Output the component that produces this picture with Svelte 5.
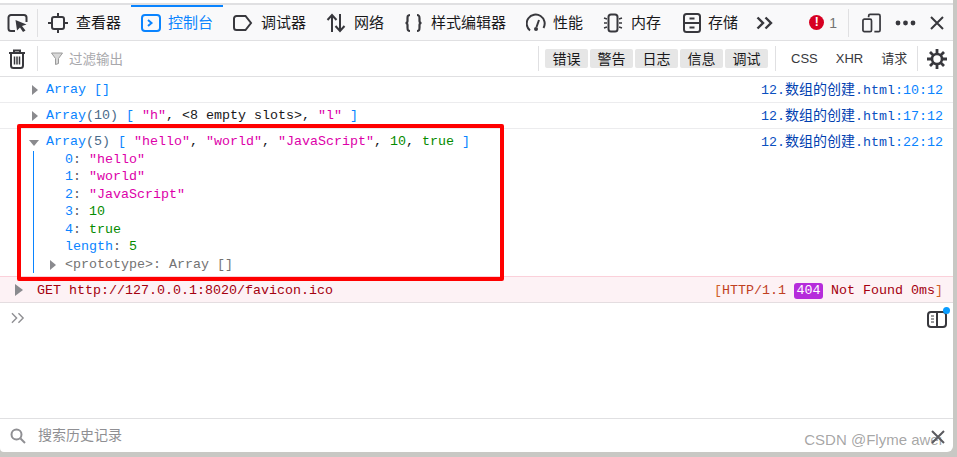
<script>
	const tabs = [
		{ id: 'inspector', label: '查看器' },
		{ id: 'console', label: '控制台', active: true },
		{ id: 'debugger', label: '调试器' },
		{ id: 'network', label: '网络' },
		{ id: 'style', label: '样式编辑器' },
		{ id: 'perf', label: '性能' },
		{ id: 'memory', label: '内存' },
		{ id: 'storage', label: '存储' }
	];
	const levels = ['错误', '警告', '日志', '信息', '调试'];
	const kinds = ['CSS', 'XHR', '请求'];
</script>

<div class="window">
	<nav class="tabs">
		<button class="pick" aria-label="pick">
			<svg width="21" height="20" viewBox="0 0 21 20" fill="none" stroke="#38383d" stroke-width="2"><path d="M8 18H4a2.500 2.500 0 0 1-2.500-2.500v-11A2.500 2.500 0 0 1 4 2h13a2.500 2.500 0 0 1 2.500 2.500V9" /><path d="M8.500 7l11 4.500-4.500 1.500 3.500 4.500-2.500 1.500-3-4.500-3 3z" fill="#38383d" stroke="none" /></svg>
		</button>
		{#each tabs as tab}
			<div class="tab {tab.id}" class:active={tab.active}>
				{#if tab.id === 'inspector'}
					<svg width="20" height="20" viewBox="0 0 20 20" fill="none" stroke="#38383d" stroke-width="2"><rect x="4" y="4" width="12" height="12" rx="2" /><path d="M10 0v4M10 16v4M0 10h4M16 10h4" /></svg>
				{:else if tab.id === 'console'}
					<svg width="20" height="20" viewBox="0 0 20 20" fill="none" stroke="#0a84ff" stroke-width="2"><rect x="1" y="2" width="18" height="16" rx="3" /><path d="M7 7l3.500 3L7 13" /></svg>
				{:else if tab.id === 'debugger'}
					<svg width="20" height="20" viewBox="0 0 20 20" fill="none" stroke="#38383d" stroke-width="2"><path d="M3.500 3h9l5.500 7-5.500 7h-9A2.500 2.500 0 0 1 1 14.500v-9A2.500 2.500 0 0 1 3.500 3z" /></svg>
				{:else if tab.id === 'network'}
					<svg width="20" height="20" viewBox="0 0 20 20" fill="none" stroke="#38383d" stroke-width="2"><path d="M6 19V2M1.500 7L6 2l4.500 5M14 1v17M9.500 13l4.500 5 4.500-5" /></svg>
				{:else if tab.id === 'style'}
					<svg width="20" height="20" viewBox="0 0 20 20" fill="none" stroke="#38383d" stroke-width="2.200"><path d="M6 2C3.500 2 3.500 3.500 3.500 5.500V8c0 1.500-1 2-2 2 1 0 2 .5 2 2v2.500c0 2 0 3.500 2.500 3.500" /><path d="M13 2c2.500 0 2.500 1.500 2.500 3.500V8c0 1.500 1 2 2 2-1 0-2 .5-2 2v2.500c0 2 0 3.500-2.500 3.500" /></svg>
				{:else if tab.id === 'perf'}
					<svg width="20" height="20" viewBox="0 0 20 20" fill="none" stroke="#38383d" stroke-width="2"><path d="M4 17.500A9 9 0 1 1 17.500 15" /><path d="M13 7l-2.500 7" /><circle cx="10" cy="16" r="2" fill="#38383d" stroke="none" /></svg>
				{:else if tab.id === 'memory'}
					<svg width="20" height="20" viewBox="0 0 20 20" fill="none" stroke="#38383d" stroke-width="1.500"><rect x="5.500" y="1.500" width="9" height="17" rx="2.500" stroke-width="2" /><path d="M1 5l3 1M1 10h3M1 15l3-1M16 6l3-1M16 10h3M16 14l3 1" /></svg>
				{:else if tab.id === 'storage'}
					<svg width="20" height="20" viewBox="0 0 20 20" fill="none" stroke="#38383d" stroke-width="2"><rect x="2" y="1" width="16" height="18" rx="2.500" /><path d="M2 10h16M7.500 5.500h5M7.500 14.500h5" /></svg>
				{/if}
				<span class="label">{tab.label}</span>
			</div>
		{/each}
		<svg class="more" width="18" height="14" viewBox="0 0 18 14" fill="none" stroke="#38383d" stroke-width="2.400"><path d="M1.500 1.500L7 7l-5.500 5.500M9.500 1.500L15 7l-5.500 5.500" /></svg>
		<div class="right">
			<div class="errors">
				<span class="dot">!</span>
				<span class="count">1</span>
			</div>
			<div class="tools">
				<svg width="19" height="20" viewBox="0 0 20 20" fill="none" stroke="#38383d" stroke-width="1.800"><path d="M7 4V2.500A1.500 1.500 0 0 1 8.500 1h9A1.500 1.500 0 0 1 19 2.500v15a1.500 1.500 0 0 1-1.500 1.500H13" /><rect x="1" y="6" width="9" height="13" rx="1.500" /></svg>
				<svg width="21" height="6" viewBox="0 0 21 6" fill="#38383d"><circle cx="3" cy="3" r="2.400" /><circle cx="10.500" cy="3" r="2.400" /><circle cx="18" cy="3" r="2.400" /></svg>
				<svg width="14" height="14" viewBox="0 0 14 14" fill="none" stroke="#38383d" stroke-width="2"><path d="M1 1l12 12M13 1L1 13" /></svg>
			</div>
		</div>
	</nav>

	<div class="filters">
		<div class="trash">
			<svg width="16" height="20" viewBox="0 0 16 20" fill="none" stroke="#38383d" stroke-width="2"><path d="M0 4h16M5 3V1.500h6V3" /><path d="M2 4.500v12A2.500 2.500 0 0 0 4.500 19h7a2.500 2.500 0 0 0 2.500-2.500v-12" /><path d="M5.500 7.500v8M8 7.500v8M10.500 7.500v8" stroke-width="1.500" /></svg>
		</div>
		<div class="search">
			<svg width="12" height="13" viewBox="0 0 12 13" fill="#d8d8d8" stroke="#9a9a9a" stroke-width="1"><path d="M.500 1h11L7.500 6.500v5l-3 1V6.500z" /></svg>
			<span class="placeholder">过滤输出</span>
		</div>
		<div class="levels">
			{#each levels as level}
				<span class="level">{level}</span>
			{/each}
		</div>
		<div class="kinds">
			{#each kinds as kind}
				<span>{kind}</span>
			{/each}
		</div>
		<div class="gear">
			<svg width="20" height="20" viewBox="0 0 20 20" fill="none" stroke="#38383d"><circle cx="10" cy="10" r="5" stroke-width="2.600" /><path d="M10 0v5M10 15v5M0 10h5M15 10h5M3 3l3.500 3.500M13.500 13.500L17 17M17 3l-3.500 3.500M6.500 13.500L3 17" stroke-width="2.800" /></svg>
		</div>
	</div>

	<main class="log">
		<div class="row">
			<span class="arrow"></span>
			<div class="msg"><span class="obj">Array</span> <span class="br">[]</span></div>
			<span class="src">12.<i>数组的创建</i>.html<em>:10:12</em></span>
		</div>
		<div class="row">
			<span class="arrow"></span>
			<div class="msg"><span class="obj">Array<span class="num-grey">(10)</span></span> <span class="br">[</span> <span class="str">"h"</span>, &lt;8 empty slots&gt;, <span class="str">"l"</span> <span class="br">]</span></div>
			<span class="src">12.<i>数组的创建</i>.html<em>:17:12</em></span>
		</div>
		<div class="row open">
			<span class="arrow down"></span>
			<div class="msg">
				<div><span class="obj">Array<span class="num-grey">(5)</span></span> <span class="br">[</span> <span class="str">"hello"</span>, <span class="str">"world"</span>, <span class="str">"JavaScript"</span>, <span class="nr">10</span>, <span class="nr">true</span> <span class="br">]</span></div>
				<div class="props">
					<div><span class="key">0</span><span class="colon">:</span> <span class="str">"hello"</span></div>
					<div><span class="key">1</span><span class="colon">:</span> <span class="str">"world"</span></div>
					<div><span class="key">2</span><span class="colon">:</span> <span class="str">"JavaScript"</span></div>
					<div><span class="key">3</span><span class="colon">:</span> <span class="nr">10</span></div>
					<div><span class="key">4</span><span class="colon">:</span> <span class="nr">true</span></div>
					<div><span class="key">length</span><span class="colon">:</span> <span class="nr">5</span></div>
					<div class="proto"><span class="arrow small"></span>&lt;prototype&gt;: Array []</div>
				</div>
			</div>
			<span class="src">12.<i>数组的创建</i>.html<em>:22:12</em></span>
		</div>
		<div class="row error">
			<span class="arrow big"></span>
			<div class="msg">GET http://127.0.0.1:8020/favicon.ico</div>
			<span class="status"><span class="bracket">[</span><span class="http">HTTP/1.1</span> <span class="badge">404</span> Not Found 0ms<span class="bracket">]</span></span>
		</div>
		<div class="prompt">
			<svg width="14" height="12" viewBox="0 0 15 12" fill="none" stroke="#8f8f93" stroke-width="1.500"><path d="M1 1l5 5-5 5M8 1l5 5-5 5" /></svg>
			<svg class="side" width="20" height="17" viewBox="0 0 20 17" fill="none" stroke="#38383d" stroke-width="2"><rect x="1" y="1" width="18" height="15" rx="3" /><path d="M10 1v15" /><path d="M4 5h3M4 8h3M4 11h3" stroke-width="1" /></svg>
			<span class="ping"></span>
		</div>
	</main>

	<footer class="history">
		<svg width="16" height="16" viewBox="0 0 16 16" fill="none" stroke="#8f8f93" stroke-width="2"><circle cx="6.500" cy="6.500" r="5" /><path d="M10.500 10.500L15 15" /></svg>
		<span class="hint">搜索历史记录</span>
		<span class="mark">CSDN @Flyme awei</span>
		<svg class="close" width="14" height="14" viewBox="0 0 14 14" fill="none" stroke="#5a5a5f" stroke-width="2"><path d="M1 1l12 12M13 1L1 13" /></svg>
	</footer>

	<div class="highlight"></div>
</div>

<style>
	:global(body) {
		background: #c8c8c4;
		overflow: hidden;
	}
	.window {
		position: relative;
		width: 953px;
		height: 452px;
		background: #fff;
		border-bottom-right-radius: 6px;
		border-bottom-left-radius: 4px;
		font-family: "Liberation Sans", "Noto Sans CJK SC", sans-serif;
		overflow: hidden;
		display: flex;
		flex-direction: column;
		color: #18181a;
	}
	.tabs {
		box-sizing: border-box;
		height: 38px;
		margin-top: 3px;
		border-top: 2px solid #e0e0e2;
		border-bottom: 1px solid #e0e0e2;
		background: #f9f9fa;
		display: flex;
		align-items: center;
		font-size: 15px;
		font-family: "Noto Sans CJK SC", sans-serif;
		flex: none;
	}
	.pick {
		all: unset;
		width: 38px;
		height: 28px;
		display: flex;
		align-items: center;
		justify-content: center;
		border-right: 1px solid #e0e0e2;
		flex: none;
		box-sizing: border-box;
		padding-right: 3px;
	}
	.tab {
		display: flex;
		align-items: center;
		gap: 8px;
		height: 100%;
		position: relative;
		box-sizing: border-box;
		flex: none;
		white-space: nowrap;
	}
	.label {
		margin-bottom: 3px;
	}
	.tab.inspector { width: 93px; padding-left: 10px; }
	.tab.console { width: 92px; padding-left: 10px; gap: 7px; color: #0a84ff; }
	.tab.console::before {
		content: '';
		position: absolute;
		left: 0;
		right: 0;
		top: 0;
		height: 2px;
		background: #0a84ff;
	}
	.tab.debugger { width: 100px; padding-left: 10px; }
	.tab.network { width: 76px; padding-left: 3px; }
	.tab.style { width: 122px; padding-left: 5px; gap: 7px; }
	.tab.perf { width: 77px; padding-left: 5px; gap: 7px; }
	.tab.memory { width: 79px; padding-left: 5px; }
	.tab.storage { width: 72px; padding-left: 5px; gap: 6px; }
	.more {
		margin-left: 7px;
		flex: none;
	}
	.right {
		margin-left: auto;
		display: flex;
		align-items: center;
		height: 100%;
	}
	.errors {
		display: flex;
		align-items: center;
		gap: 5px;
		height: 28px;
		padding-right: 11px;
		border-right: 1px solid #e0e0e2;
	}
	.dot {
		width: 15px;
		height: 15px;
		border-radius: 50%;
		background: #d70022;
		color: #fff;
		font: bold 12px/15px "Liberation Sans", sans-serif;
		text-align: center;
	}
	.count {
		font: 14px "Liberation Sans", sans-serif;
		color: #737373;
	}
	.tools {
		display: flex;
		align-items: center;
		gap: 14px;
		padding: 0 9px 0 13px;
	}
	.filters {
		box-sizing: border-box;
		height: 36px;
		border-bottom: 1px solid #e0e0e2;
		display: flex;
		align-items: center;
		flex: none;
	}
	.trash {
		width: 38px;
		height: 25px;
		border-right: 1px solid #e0e0e2;
		box-sizing: border-box;
		display: flex;
		align-items: center;
		justify-content: center;
		padding-right: 4px;
	}
	.search {
		display: flex;
		align-items: center;
		gap: 6px;
		padding-left: 13px;
		flex: 1;
		color: #a8a8ac;
		font-family: "Noto Sans CJK SC", sans-serif;
		font-size: 13.500px;
	}
	.placeholder {
		margin-bottom: 2px;
	}
	.levels {
		width: 238px;
		height: 25px;
		box-sizing: border-box;
		border-left: 1px solid #e0e0e2;
		border-right: 1px solid #e0e0e2;
		display: flex;
		align-items: center;
		gap: 2px;
		padding-left: 6px;
	}
	.level {
		width: 43px;
		height: 19px;
		line-height: 19px;
		border-radius: 2px;
		background: #e6e6e6;
		text-align: center;
		font-family: "Noto Sans CJK SC", sans-serif;
		font-size: 14px;
		color: #18181a;
	}
	.kinds {
		width: 142px;
		height: 25px;
		box-sizing: border-box;
		border-right: 1px solid #e0e0e2;
		display: flex;
		align-items: center;
		gap: 18px;
		padding-left: 15px;
		color: #38383d;
		font-size: 13px;
		line-height: 18px;
	}
	.gear {
		width: 35px;
		display: flex;
		justify-content: center;
		padding-left: 3px;
		box-sizing: border-box;
	}
	.log {
		flex: 1;
		min-height: 0;
		font: 13.330px/17.500px "Liberation Mono", "Noto Sans CJK SC", monospace;
		display: flex;
		flex-direction: column;
	}
	.row {
		position: relative;
		display: flex;
		height: 26px;
		box-sizing: border-box;
		padding: 4px 10px 0 46px;
		border-bottom: 1px solid #ececee;
		color: #18181a;
		flex: none;
	}
	.row.open {
		height: auto;
		padding-top: 4px;
		padding-bottom: 3px;
		border-bottom: none;
	}
	.msg {
		flex: 1;
		white-space: nowrap;
	}
	.src {
		color: #0a50c0;
		white-space: nowrap;
	}
	.src i {
		font: 14px/1 "Noto Sans CJK SC", sans-serif;
		color: #0040b0;
	}
	.src em {
		font-style: normal;
		color: #0a84ff;
	}
	.arrow {
		position: absolute;
		left: 32px;
		top: 8px;
		width: 0;
		height: 0;
		border-left: 6px solid #8a8a8e;
		border-top: 5px solid transparent;
		border-bottom: 5px solid transparent;
	}
	.arrow.down {
		left: 29px;
		top: 11px;
		border-top: 6px solid #8a8a8e;
		border-left: 5px solid transparent;
		border-right: 5px solid transparent;
		border-bottom: none;
	}
	.arrow.big {
		left: 15px;
		top: 7px;
		border-left-width: 8px;
		border-top-width: 6px;
		border-bottom-width: 6px;
	}
	.obj { color: #0a84ff; }
	.num-grey { color: #4a6a8a; }
	.br { color: #0a84ff; }
	.str { color: #dd00a9; }
	.nr { color: #058b00; }
	.key { color: #0a84ff; }
	.colon { color: #5a5a60; }
	.props {
		margin-left: -13px;
		padding-left: 31px;
		border-left: 1px solid #0a84ff;
	}
	.proto {
		position: relative;
		color: #737373;
	}
	.proto .arrow {
		left: -15px;
		top: 4px;
	}
	.row.error {
		height: 27px;
		padding: 5px 10px 0 37px;
		background: #fdf2f5;
		border-top: 1px solid #fbd0da;
		border-bottom: 1px solid #e4dde0;
		color: #a4000f;
	}
	.status {
		white-space: nowrap;
	}
	.bracket { color: #d0602a; }
	.http { color: #c0401f; }
	.badge {
		display: inline-block;
		background: #b62cdb;
		color: #fff;
		border-radius: 3px;
		padding: 0 2.500px;
		line-height: 16px;
	}
	.prompt {
		position: relative;
		flex: 1;
		padding: 9px 0 0 11px;
	}
	.side {
		position: absolute;
		right: 6px;
		top: 8px;
	}
	.ping {
		position: absolute;
		right: 3px;
		top: 4px;
		width: 7px;
		height: 7px;
		border-radius: 50%;
		background: #0a9dff;
	}
	.history {
		position: relative;
		box-sizing: border-box;
		height: 34px;
		border-top: 1px solid #e0e0e2;
		display: flex;
		align-items: center;
		padding-left: 10px;
		gap: 12px;
		flex: none;
	}
	.hint {
		font-family: "Noto Sans CJK SC", sans-serif;
		font-size: 14px;
		color: #8f8f93;
		margin-bottom: 3px;
	}
	.close {
		position: absolute;
		right: 8px;
		top: 11px;
	}
	.mark {
		position: absolute;
		right: 11px;
		top: 12px;
		font-size: 15px;
		color: rgba(90, 90, 90, 0.55);
		white-space: nowrap;
	}
	.highlight {
		position: absolute;
		left: 17px;
		top: 124px;
		width: 487px;
		height: 157px;
		box-sizing: border-box;
		border: 4px solid #f00;
		border-radius: 2px;
	}
</style>
